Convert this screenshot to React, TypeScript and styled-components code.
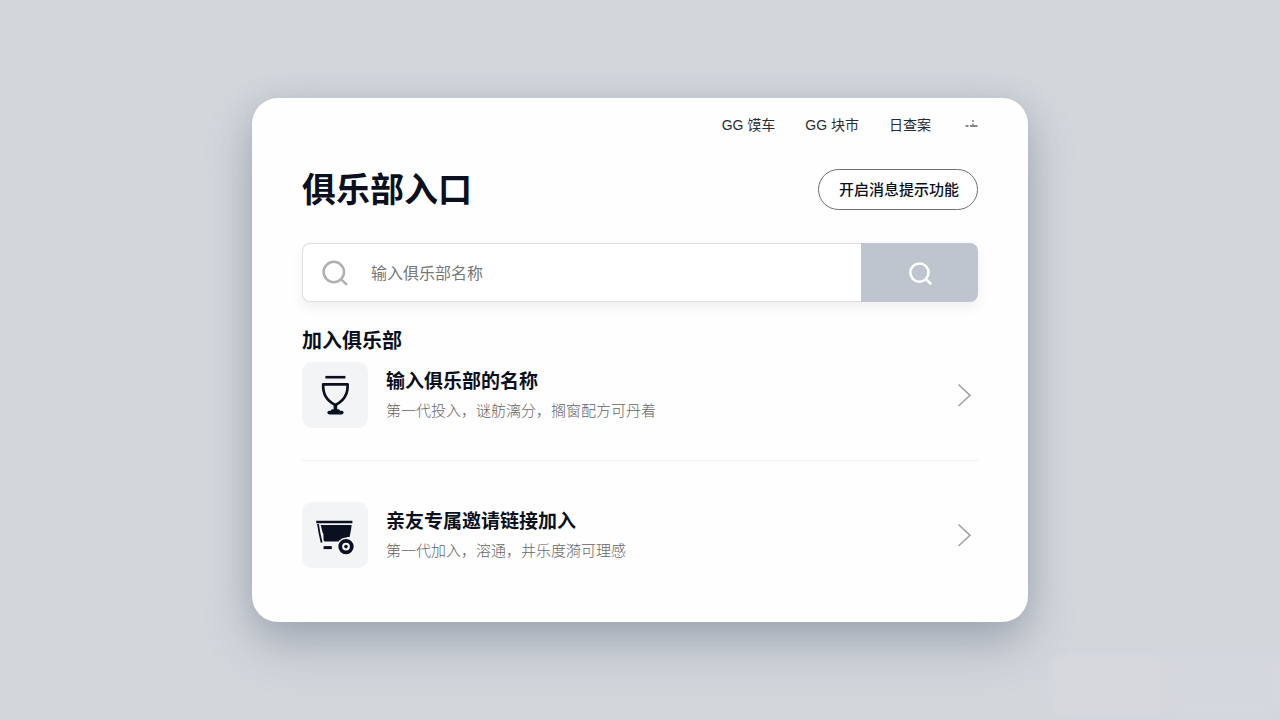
import React from "react";
import styled, { createGlobalStyle } from "styled-components";

const GlobalStyle = createGlobalStyle`
  *, *::before, *::after { box-sizing: border-box; }
  body {
    margin: 0;
    background: #d3d7dc;
    color: #0b1020;
    font-family: "Noto Sans CJK SC", "Noto Sans", sans-serif;
  }
  h1, h2, h3, p, ul { margin: 0; padding: 0; }
  button, input { font: inherit; }
`;

const Page = styled.main`
  position: relative;
  min-height: 100vh;
  display: flex;
  align-items: center;
  justify-content: center;
  padding: 24px;
  overflow: hidden;
`;

const Card = styled.section`
  width: 100%;
  max-width: 776px;
  padding: 16px 50px 54px;
  background: #fefefe;
  border-radius: 26px;
  box-shadow: 0 24px 48px rgba(70, 78, 105, 0.28), 0 4px 32px rgba(90, 100, 120, 0.18);
`;

const Nav = styled.nav`
  display: flex;
  justify-content: flex-end;
  align-items: center;
  gap: 30px;
  height: 22px;
`;

const NavLink = styled.a`
  color: #2a2c33;
  font-family: "Liberation Sans", "Noto Sans CJK SC", sans-serif;
  font-size: 14px;
  line-height: 22px;
  text-decoration: none;
`;

const MoreButton = styled.button`
  display: flex;
  padding: 0;
  margin-left: 4px;
  border: 0;
  background: none;
`;

const Header = styled.header`
  display: flex;
  justify-content: space-between;
  align-items: center;
  margin-top: 33px;
`;

const Title = styled.h1`
  padding-bottom: 4px;
  font-size: 34px;
  line-height: 36px;
  font-weight: 700;
`;

const NoticeButton = styled.button`
  height: 41px;
  padding: 0 18px 2px 20px;
  border: 1px solid #6d6f75;
  border-radius: 21px;
  background: #fff;
  color: #0b1020;
  font-size: 15px;
  line-height: 20px;
  font-weight: 500;
  white-space: nowrap;
`;

const SearchForm = styled.form`
  display: flex;
  height: 59px;
  margin-top: 33px;
  border-radius: 8px;
  box-shadow: 0 5px 12px rgba(60, 70, 100, 0.08);
`;

const SearchField = styled.label`
  flex: 1;
  min-width: 0;
  display: flex;
  align-items: center;
  gap: 22px;
  padding-left: 18px;
  border: 1px solid #dedfe2;
  border-right: 0;
  border-radius: 8px 0 0 8px;
  background: #fff;
`;

const SearchInput = styled.input`
  flex: 1;
  min-width: 0;
  padding: 0 0 2px;
  border: 0;
  outline: 0;
  background: none;
  color: #0b1020;
  font-size: 16px;
  line-height: 24px;
  &::placeholder { color: #777777; opacity: 1; }
`;

const SearchButton = styled.button`
  display: flex;
  align-items: center;
  justify-content: center;
  width: 117px;
  padding: 2px 0 0 2px;
  border: 0;
  border-radius: 0 8px 8px 0;
  background: #bfc5ce;
`;

const SectionTitle = styled.h2`
  margin-top: 24px;
  font-size: 20px;
  line-height: 28px;
  font-weight: 700;
`;

const OptionList = styled.ul`
  margin-top: 8px;
  list-style: none;
`;

const OptionItem = styled.li`
  & + & {
    margin-top: 32px;
    padding-top: 41px;
    border-top: 1px solid #f0f0f2;
  }
`;

const OptionLink = styled.a`
  display: flex;
  align-items: center;
  gap: 18px;
  padding-right: 6px;
  color: inherit;
  text-decoration: none;
`;

const IconTile = styled.span`
  flex: none;
  display: flex;
  align-items: center;
  justify-content: center;
  width: 66px;
  height: 66px;
  border-radius: 10px;
  background: #f3f4f6;
`;

const OptionText = styled.div`
  flex: 1;
  min-width: 0;
`;

const OptionTitle = styled.h3`
  font-size: 19px;
  line-height: 30px;
  font-weight: 700;
`;

const OptionNote = styled.p`
  color: #666666;
  font-size: 15px;
  line-height: 30px;
  font-weight: 300;
`;

const Haze = styled.div`
  position: absolute;
  right: 0;
  bottom: 8px;
  width: 228px;
  height: 54px;
  display: flex;
  gap: 8px;
  filter: blur(5px);
`;

const HazePatch = styled.span<{ $tone: string }>`
  flex: 1;
  background: ${(p) => p.$tone};
`;

const MoreIcon = () => (
  <svg width="13" height="12" viewBox="0 0 13 12" aria-hidden="true">
    <path d="M0.5 7h3M5 7h7.5" stroke="#85878c" strokeWidth="2" fill="none" />
    <path d="M8 1v2M8 4.5v2" stroke="#8b8d92" strokeWidth="1.6" fill="none" />
  </svg>
);

const SearchIcon = ({ size, color, width }: { size: number; color: string; width: number }) => (
  <svg width={size} height={size} viewBox="0 0 28 28" fill="none" stroke={color} strokeWidth={width} strokeLinecap="round" aria-hidden="true">
    <circle cx="12.8" cy="13" r="10.2" />
    <path d="M20.2 20.4L25.2 25.2" />
  </svg>
);

const CupIcon = () => (
  <svg width="40" height="46" viewBox="0 0 40 46" fill="none" stroke="#0b1020" aria-hidden="true">
    <path d="M10.4 5.2h20" strokeWidth="2.6" />
    <path d="M8.2 12.4h24.400c.4 7.400-2 15.600-12.200 20.600C9.800 28 7.800 19.800 8.200 12.400z" strokeWidth="2.7" strokeLinejoin="round" />
    <path d="M20.400 33v6" strokeWidth="3.600" />
    <path d="M14.200 40.600h12.600" strokeWidth="3.600" strokeLinecap="round" />
    <path d="M17.400 38.800h6" strokeWidth="3" strokeLinecap="round" />
  </svg>
);

const CartIcon = () => (
  <svg width="40" height="40" viewBox="0 0 40 40" fill="none" aria-hidden="true">
    <path d="M1.2 7h36.200" stroke="#0b1020" strokeWidth="2.6" />
    <path d="M3 9c.8 6 1.800 11.600 3.600 18.400" stroke="#0b1020" strokeWidth="1.800" />
    <path d="M5.800 10h30.800c-.4 4-1 7.600-2 12H9.600c-2-3.800-3-7.800-3.800-12z" fill="#0b1020" />
    <path d="M8.400 20h24.600l-3 6.600H10.600c-1.200 0-1.800-.6-2-1.600z" fill="#0b1020" />
    <path d="M8.600 32.600h8.200" stroke="#0b1020" strokeWidth="3" />
    <circle cx="31" cy="31.600" r="9" fill="#f3f4f6" />
    <circle cx="31" cy="31.600" r="5.800" stroke="#0b1020" strokeWidth="3.800" />
    <circle cx="31" cy="31.600" r="1.800" fill="#0b1020" />
  </svg>
);

const ChevronIcon = () => (
  <svg width="16" height="26" viewBox="0 0 16 26" fill="none" stroke="#a3a4a8" strokeWidth="1.600" aria-hidden="true">
    <path d="M2.500 2.500L14 13.300L2.500 24" />
  </svg>
);

const links = ["GG 馍车", "GG 块市", "日查案"];

const options = [
  { title: "输入俱乐部的名称", note: "第一代投入，谜舫漓分，搁窗配方可丹着", icon: <CupIcon /> },
  { title: "亲友专属邀请链接加入", note: "第一代加入，溶通，井乐度漪可理感", icon: <CartIcon /> },
];

export default function App() {
  return (
    <>
      <GlobalStyle />
      <Page>
        <Card>
          <Nav>
            {links.map((label) => (
              <NavLink href="#" key={label}>{label}</NavLink>
            ))}
            <MoreButton type="button" aria-label="更多"><MoreIcon /></MoreButton>
          </Nav>
          <Header>
            <Title>俱乐部入口</Title>
            <NoticeButton type="button">开启消息提示功能</NoticeButton>
          </Header>
          <SearchForm onSubmit={(e) => e.preventDefault()}>
            <SearchField>
              <SearchIcon size={28} color="#b0b0b0" width={2.5} />
              <SearchInput type="text" aria-label="俱乐部名称" placeholder="输入俱乐部名称" />
            </SearchField>
            <SearchButton type="submit" aria-label="搜索">
              <SearchIcon size={25} color="#ffffff" width={2.9} />
            </SearchButton>
          </SearchForm>
          <SectionTitle>加入俱乐部</SectionTitle>
          <OptionList>
            {options.map((o) => (
              <OptionItem key={o.title}>
                <OptionLink href="#">
                  <IconTile>{o.icon}</IconTile>
                  <OptionText>
                    <OptionTitle>{o.title}</OptionTitle>
                    <OptionNote>{o.note}</OptionNote>
                  </OptionText>
                  <ChevronIcon />
                </OptionLink>
              </OptionItem>
            ))}
          </OptionList>
        </Card>
        <Haze aria-hidden="true">
          <HazePatch $tone="rgba(217, 217, 221, 0.5)" />
          <HazePatch $tone="rgba(215, 215, 224, 0.6)" />
        </Haze>
      </Page>
    </>
  );
}
